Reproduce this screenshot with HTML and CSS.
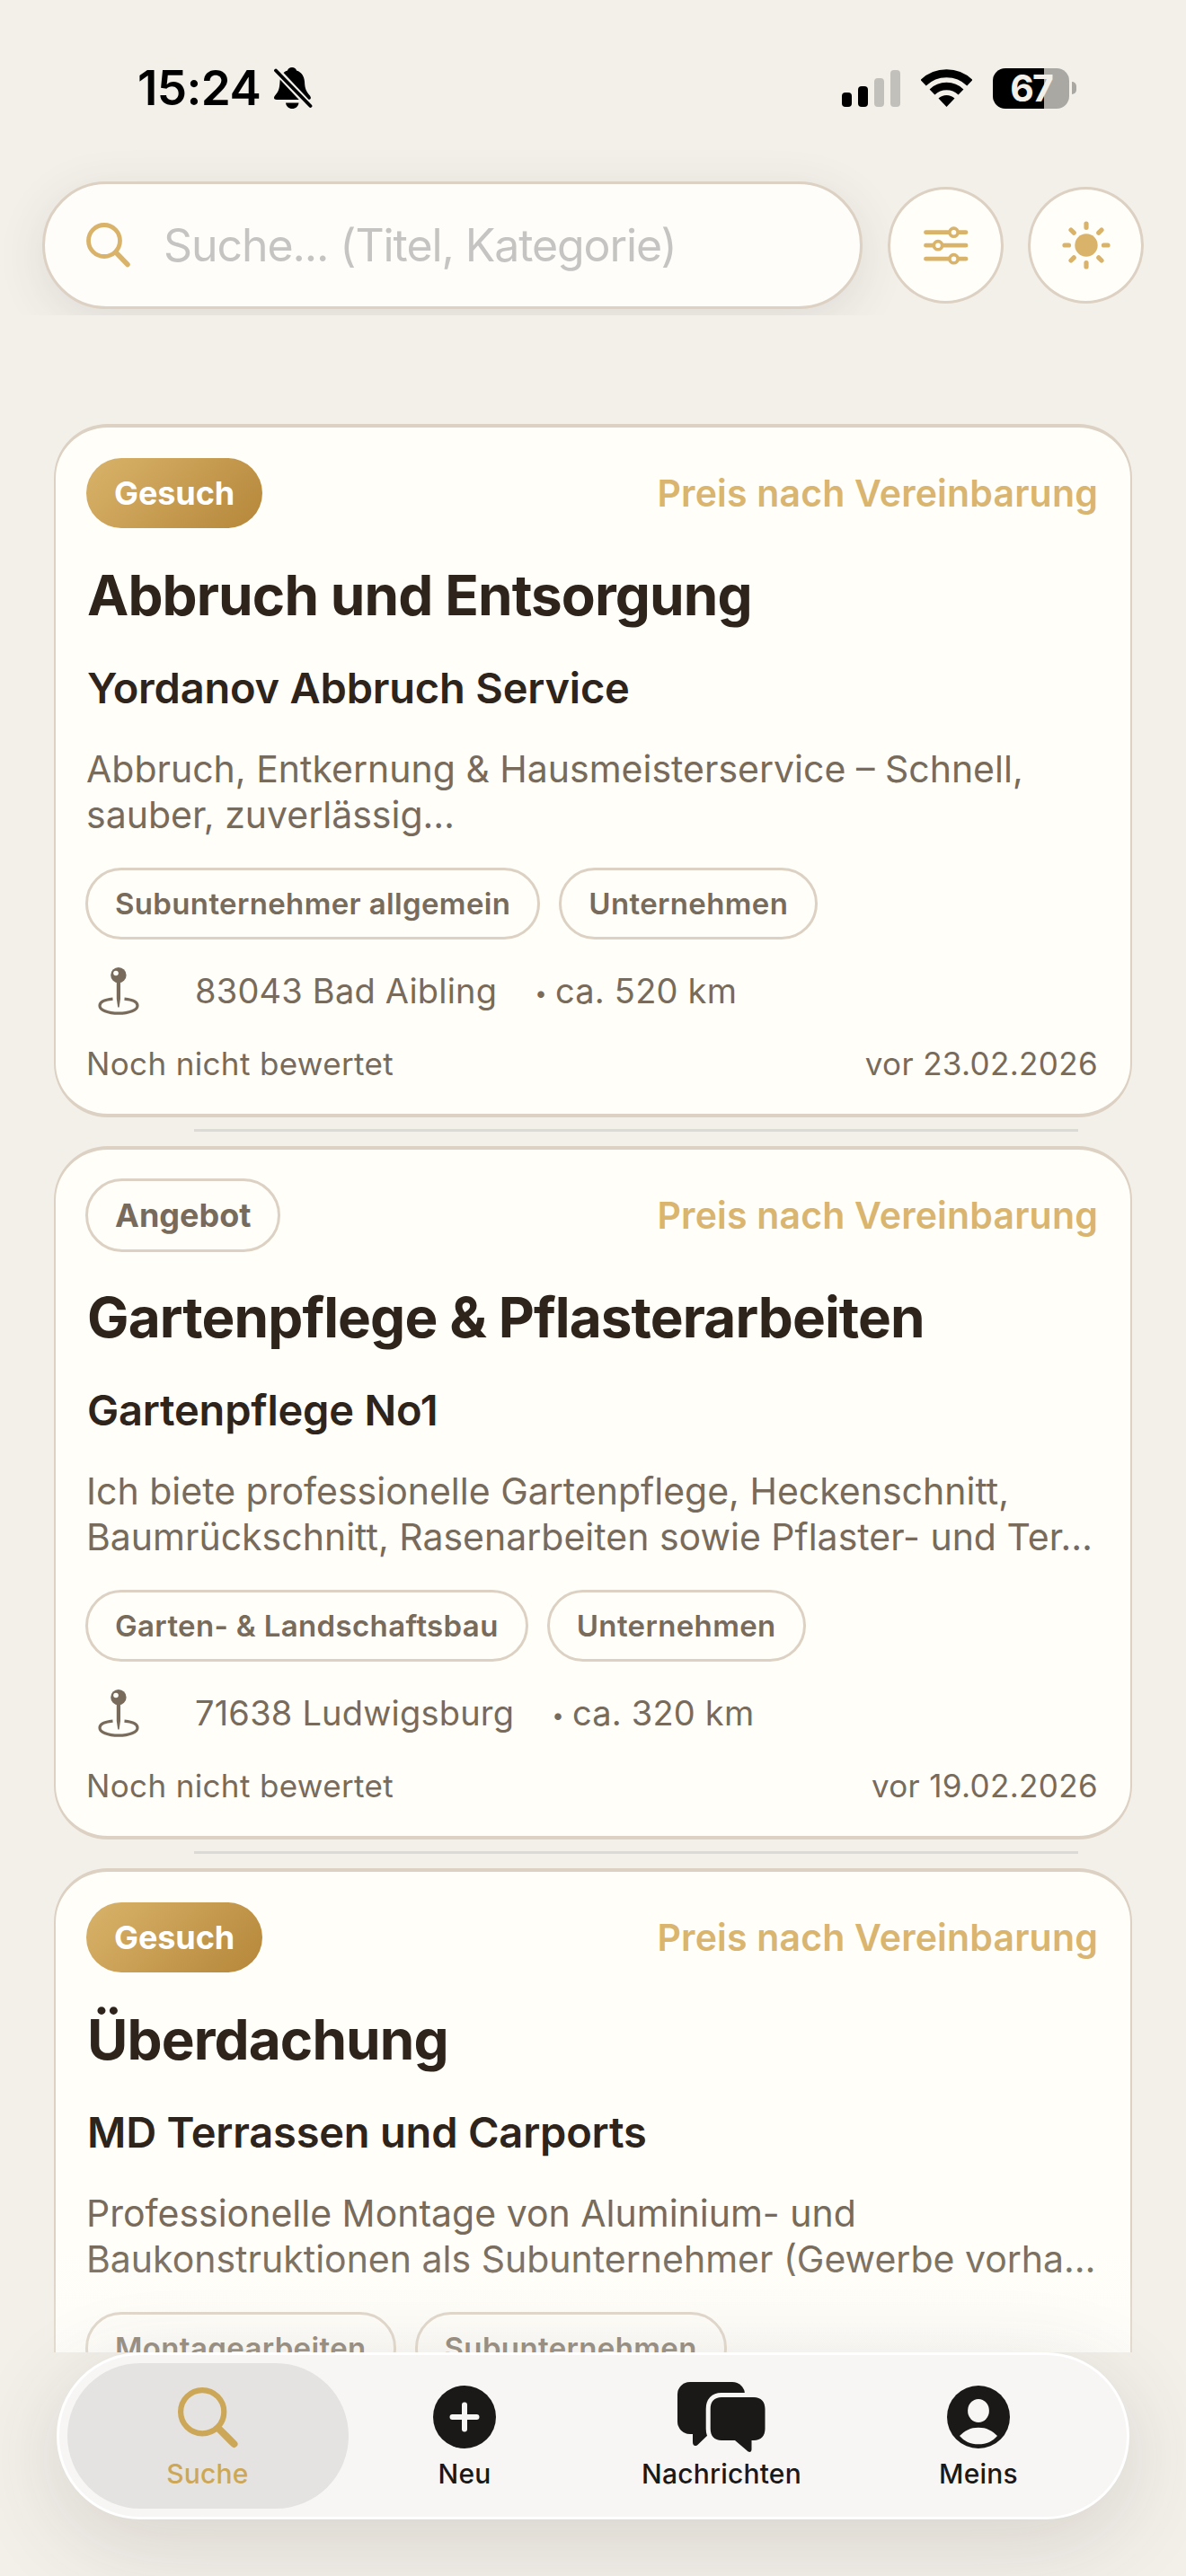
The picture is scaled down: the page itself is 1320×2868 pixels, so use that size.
FILE: index.html
```html
<!DOCTYPE html>
<html lang="de">
<head>
    <meta charset="UTF-8">
    <meta name="viewport" content="width=device-width, initial-scale=1.0">
    <title>Suche</title>
    <link rel="stylesheet" href="styles.css">
</head>
<body>
    <!-- Icons -->
    <svg class="sprite" width="0" height="0">
        <symbol id="pin" viewBox="0 0 46 53">
            <path d="M16.500 35.200 C8 36 2 38.500 2 42.700 C2 47.500 11 51.200 22.900 51.200 S44 47.500 44 42.700 C44 38.500 38 36 29.500 35.200" fill="none" stroke="currentColor" stroke-width="3.200"/>
            <path d="M20.800 15h4.200v20l-1.400 9.500h-1.400L20.800 35z" fill="currentColor"/>
            <circle cx="22.900" cy="8.700" r="8.700" fill="currentColor"/>
            <circle cx="20" cy="6.500" r="2.800" fill="#fffef9"/>
        </symbol>
    </svg>

    <div class="app">
        <!-- Statusleiste -->
        <div class="status-bar">
            <div class="status-left">
                <span class="time">15:24</span>
                <svg width="43" height="46" viewBox="0 0 43 46">
                    <path d="M20 0C22.500 0 24.500 1.300 25 3.500C31 5.500 33.500 10 34 16C34.300 24 36 27 39.500 31C42 34 41 36 38 36H3C0 36 -1 34 1 31.500C5 27 6 24 6.500 16C7 10 9 5.500 15 3.500C15.500 1.300 17.500 0 20 0Z"/>
                    <path d="M13 39.500H27.500C27 43.500 24 46 20.200 46S13.500 43.500 13 39.500Z"/>
                    <path d="M-2 -1.500L45 48.500" stroke="#f3f0ea" stroke-width="8"/>
                    <path d="M2 3.500L40.500 43" stroke="#000" stroke-width="3.800" stroke-linecap="round"/>
                </svg>
            </div>
            <div class="status-right">
                <div class="signal">
                    <i class="bar bar-1"></i><i class="bar bar-2"></i><i class="bar bar-3"></i><i class="bar bar-4"></i>
                </div>
                <svg class="wifi" width="57" height="42" viewBox="0 0 57 42">
                    <g fill="none" stroke="#000">
                        <path d="M2.600 15.200A37.300 37.300 0 0 1 54.400 15.200" stroke-width="9"/>
                        <path d="M12.500 25.500A23 23 0 0 1 44.500 25.500" stroke-width="8.400"/>
                    </g>
                    <path d="M28.500 42L19.500 32.600A13 13 0 0 1 37.500 32.600Z"/>
                </svg>
                <div class="battery">67</div>
                <i class="battery-tip"></i>
            </div>
        </div>

        <!-- Suche -->
        <div class="search-row">
            <div class="search-field">
                <svg width="50" height="50" viewBox="0 0 50 50" fill="none" stroke="#d9b36a" stroke-linecap="round">
                    <circle cx="20" cy="20" r="17.500" stroke-width="4.800"/>
                    <path d="M33 33L46 46.500" stroke-width="5.500"/>
                </svg>
                <span class="placeholder">Suche... (Titel, Kategorie)</span>
            </div>
            <div class="round-btn">
                <svg width="54" height="54" viewBox="0 0 54 54" fill="none" stroke="#d9b36a" stroke-linecap="round">
                    <path d="M4.500 12.700H49M4.500 27.200H49M4.500 42.200H49" stroke-width="4.800"/>
                    <g fill="#fffef9" stroke-width="3.600">
                        <circle cx="35.500" cy="12.700" r="4.600"/>
                        <circle cx="18" cy="27.200" r="4.600"/>
                        <circle cx="35.500" cy="42.200" r="4.600"/>
                    </g>
                </svg>
            </div>
            <div class="round-btn">
                <svg width="54" height="54" viewBox="-27 -27 54 54" stroke="#d9b36a" stroke-width="5.200" stroke-linecap="round">
                    <circle r="12.700" fill="#d9b36a" stroke="none"/>
                    <path d="M0 -24V-19.500M0 24V19.500M-24 0H-19.500M24 0H19.500M-17 -17L-13.800 -13.800M17 17L13.800 13.800M-17 17L-13.800 13.800M17 -17L13.800 -13.800"/>
                </svg>
            </div>
        </div>

        <!-- Liste -->
        <div class="list">
            <div class="card">
                <div class="card-head">
                    <span class="badge badge-gold">Gesuch</span>
                    <span class="price">Preis nach Vereinbarung</span>
                </div>
                <div class="title">Abbruch und Entsorgung</div>
                <div class="company">Yordanov Abbruch Service</div>
                <div class="desc">Abbruch, Entkernung &amp; Hausmeisterservice – Schnell,<br>sauber, zuverlässig…</div>
                <div class="chips">
                    <span class="chip">Subunternehmer allgemein</span>
                    <span class="chip">Unternehmen</span>
                </div>
                <div class="location">
                    <svg width="46" height="53"><use href="#pin"/></svg>
                    <span class="city">83043 Bad Aibling</span>
                    <span class="dot">•</span>
                    <span>ca. 520 km</span>
                </div>
                <div class="card-foot">
                    <span>Noch nicht bewertet</span>
                    <span>vor 23.02.2026</span>
                </div>
            </div>
            <div class="divider"></div>
            <div class="card">
                <div class="card-head">
                    <span class="badge">Angebot</span>
                    <span class="price">Preis nach Vereinbarung</span>
                </div>
                <div class="title">Gartenpflege &amp; Pflasterarbeiten</div>
                <div class="company">Gartenpflege No1</div>
                <div class="desc">Ich biete professionelle Gartenpflege, Heckenschnitt,<br>Baumrückschnitt, Rasenarbeiten sowie Pflaster- und Ter…</div>
                <div class="chips">
                    <span class="chip">Garten- &amp; Landschaftsbau</span>
                    <span class="chip">Unternehmen</span>
                </div>
                <div class="location">
                    <svg width="46" height="53"><use href="#pin"/></svg>
                    <span class="city">71638 Ludwigsburg</span>
                    <span class="dot">•</span>
                    <span>ca. 320 km</span>
                </div>
                <div class="card-foot">
                    <span>Noch nicht bewertet</span>
                    <span>vor 19.02.2026</span>
                </div>
            </div>
            <div class="divider"></div>
            <div class="card">
                <div class="card-head">
                    <span class="badge badge-gold">Gesuch</span>
                    <span class="price">Preis nach Vereinbarung</span>
                </div>
                <div class="title">Überdachung</div>
                <div class="company">MD Terrassen und Carports</div>
                <div class="desc">Professionelle Montage von Aluminium- und<br>Baukonstruktionen als Subunternehmer (Gewerbe vorha…</div>
                <div class="chips">
                    <span class="chip">Montagearbeiten</span>
                    <span class="chip">Subunternehmen</span>
                </div>
            </div>
        </div>

        <!-- Tabs -->
        <div class="tab-bar">
            <div class="tab active">
                <svg width="67" height="80" viewBox="0 0 67 80" fill="none" stroke="currentColor" stroke-linecap="round">
                    <circle cx="27.200" cy="34.200" r="24.100" stroke-width="6.200"/>
                    <path d="M45 52.500L62.500 70" stroke-width="8"/>
                </svg>
                <span>Suche</span>
            </div>
            <div class="tab">
                <svg width="70" height="80" viewBox="0 0 70 80">
                    <circle cx="35" cy="40" r="35" fill="#1a1917"/>
                    <path d="M21.500 40H48.500M35 26.500V53.500" stroke="#f7f6f5" stroke-width="6" stroke-linecap="round"/>
                </svg>
                <span>Neu</span>
            </div>
            <div class="tab">
                <svg width="98" height="80" viewBox="0 0 98 80" fill="#1a1917">
                    <rect x="0" y="1" width="75" height="58" rx="14"/>
                    <path d="M17 56V68C17 72 20 73.500 23 70.500L36 58Z"/>
                    <path d="M49 18H85C93 18 97.500 23 97.500 31V53C97.500 61 93 66 85 66H82.500V76C82.500 79 80 80 77.500 77.500L64 66H49C41 66 36.700 61 36.700 53V31C36.700 23 41 18 49 18Z" stroke="#f7f6f5" stroke-width="10" paint-order="stroke"/>
                </svg>
                <span>Nachrichten</span>
            </div>
            <div class="tab">
                <svg width="70" height="80" viewBox="0 -5 70 80">
                    <circle cx="35" cy="35" r="35" fill="#1a1917"/>
                    <ellipse cx="35" cy="28" rx="11.900" ry="13" fill="#f7f6f5"/>
                    <path d="M14 56C20 50 26 46.700 35 46.700C44 46.700 50 50 56 56C51 62 44 65.300 35 65.300C26 65.300 19 62 14 56Z" fill="#f7f6f5"/>
                </svg>
                <span>Meins</span>
            </div>
        </div>
    </div>
</body>
</html>
```

FILE: styles.css
```css
* {
    box-sizing: border-box;
}

body {
    margin: 0;
    background: #f3f0ea;
    font-family: Inter, "Liberation Sans", sans-serif;
    color: #2e241b;
}

.sprite {
    display: block;
}

.app {
    width: 1320px;
    height: 2868px;
    overflow: hidden;
    display: flex;
    flex-direction: column;
}

/* Statusleiste */
.status-bar {
    height: 194px;
    flex: none;
    display: flex;
    align-items: center;
    justify-content: space-between;
    padding: 2px 122px 0 153px;
    color: #000;
}

.status-left,
.status-right {
    display: flex;
    align-items: center;
}

.time {
    font-size: 53px;
    font-weight: 600;
    width: 152px;
    letter-spacing: -0.6px;
}

.signal {
    display: flex;
    align-items: flex-end;
    gap: 5.300px;
    height: 41px;
    margin-right: 23px;
}

.bar {
    width: 11px;
    border-radius: 4px;
    background: #000;
}

.bar-1 { height: 16px; }
.bar-2 { height: 23px; }
.bar-3 { height: 32px; background: #c2c0bb; }
.bar-4 { height: 41px; background: #c2c0bb; }

.signal {
    gap: 7px;
}

.wifi {
    margin-right: 23px;
}

.battery {
    width: 85px;
    height: 45px;
    border-radius: 14px;
    background: linear-gradient(90deg, #000 57px, #a9a8a3 57px);
    color: #f3f0ea;
    font-size: 41px;
    font-weight: 700;
    line-height: 45px;
    text-align: center;
    letter-spacing: -2px;
}

.battery-tip {
    width: 5px;
    height: 14px;
    margin-left: 3px;
    border-radius: 0 5px 5px 0;
    background: #a9a8a3;
}

/* Suche */
.search-row {
    height: 157px;
    flex: none;
    display: flex;
    align-items: center;
    padding: 1px 47px 0;
}

.search-field {
    width: 914px;
    height: 142px;
    display: flex;
    align-items: center;
    padding-left: 46px;
    margin-right: 28px;
    border: 3px solid #dcd1c2;
    border-radius: 71px;
    background: #fefdf9;
    box-shadow: 0 12px 54px rgba(60, 50, 40, 0.11);
}

.placeholder {
    margin-left: 36px;
    font-size: 50px;
    letter-spacing: -1.1px;
    color: #c5c4c2;
}

.round-btn {
    width: 129px;
    height: 130px;
    margin-right: 27px;
    flex: none;
    display: flex;
    align-items: center;
    justify-content: center;
    border: 3px solid #dcd1c2;
    border-radius: 50%;
    background: #fffef9;
}

.round-btn:last-child {
    margin-right: 0;
}

/* Liste */
.list {
    position: relative;
    height: 2268px;
    flex: none;
    overflow: hidden;
    padding: 121px 60px 0;
    background: #f3f0ea;
}

.list::after {
    content: "";
    position: absolute;
    left: 60px;
    right: 60px;
    bottom: 0;
    height: 120px;
    background: linear-gradient(rgba(250, 249, 246, 0), rgba(250, 249, 246, 0.3));
}

.card {
    height: 772px;
    padding: 34px 36px 0 34px;
    border: solid #dcd1c2;
    border-width: 4px 2px;
    border-radius: 60px;
    background: #fffef9;
}

.card-head {
    height: 78px;
    display: flex;
    align-items: center;
    justify-content: space-between;
}

.badge {
    height: 82px;
    margin-left: -1px;
    padding: 0 30px;
    border: 3px solid #dcd1c2;
    border-radius: 41px;
    color: #786b5b;
    font-size: 36px;
    font-weight: 700;
    line-height: 76px;
}

.badge-gold {
    height: 78px;
    margin-left: 0;
    padding: 0 31px;
    border: none;
    background: linear-gradient(135deg, #d9b36a, #b5873a);
    color: #fff;
    letter-spacing: -0.1px;
    line-height: 78px;
}

.price {
    color: #d9b570;
    font-size: 41px;
    font-weight: 600;
    letter-spacing: 0.18px;
}

.title {
    margin-top: 36px;
    padding-left: 1px;
    font-size: 62px;
    font-weight: 700;
    letter-spacing: -0.9px;
    line-height: 77px;
    white-space: nowrap;
}

.company {
    margin-top: 36px;
    padding-left: 1px;
    font-size: 47px;
    font-weight: 600;
    letter-spacing: -0.2px;
    line-height: 58px;
}

.desc {
    margin-top: 36px;
    color: #786b5b;
    font-size: 41px;
    line-height: 51px;
    white-space: nowrap;
}

.chips {
    display: flex;
    gap: 21px;
    margin: 33px 0 0 -1px;
}

.chip {
    height: 80px;
    padding: 0 30px;
    border: 3px solid #dcd1c2;
    border-radius: 40px;
    color: #786b5b;
    font-size: 33px;
    font-weight: 600;
    letter-spacing: 0.35px;
    line-height: 74px;
    white-space: nowrap;
}

.location {
    height: 60px;
    display: flex;
    align-items: center;
    margin-top: 27px;
    padding-left: 13px;
    color: #786b5b;
    font-size: 38px;
    letter-spacing: 0.2px;
}

.city {
    margin: 0 42px 0 62px;
}

.dot {
    margin: 5px 9px 0 0;
    font-size: 24px;
}

.card-foot {
    display: flex;
    justify-content: space-between;
    margin-top: 30px;
    color: #786b5b;
    font-size: 35px;
    letter-spacing: 0.35px;
    line-height: 43px;
}

.divider {
    height: 3px;
    margin: 13px 60px 16px 156px;
    background: #dcdad7;
}

/* Tabs */
.tab-bar {
    position: relative;
    height: 186px;
    flex: none;
    display: flex;
    margin: 0 63px;
    padding: 29px 22px 0;
    border: 3px solid #fff;
    border-radius: 93px;
    background: #f7f6f5;
    box-shadow: 0 24px 100px rgba(60, 55, 45, 0.16);
}

.tab {
    position: relative;
    flex: 1;
    display: flex;
    flex-direction: column;
    align-items: center;
    color: #1a1917;
    font-size: 30px;
    font-weight: 500;
    letter-spacing: 0.2px;
    line-height: 36px;
}

.tab svg {
    position: relative;
    margin-bottom: 5px;
}

.tab span {
    position: relative;
}

.tab.active {
    color: #cda758;
}

/* Markierung hinter dem aktiven Tab */
.tab.active::before {
    content: "";
    position: absolute;
    left: -13px;
    top: -20px;
    width: 313px;
    height: 162px;
    border-radius: 81px;
    background: #e4e3e1;
}
```
